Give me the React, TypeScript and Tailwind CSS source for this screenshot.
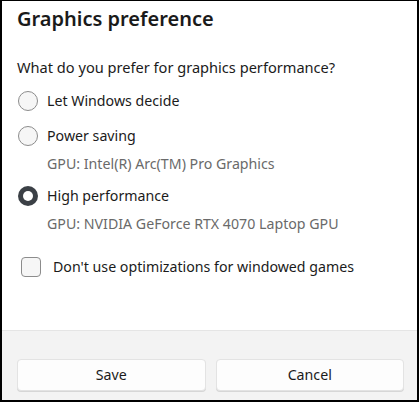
import React, { useState } from "react";

const font = { fontFamily: '"Noto Sans", "Open Sans", sans-serif' };

function Radio({
  label,
  sub,
  checked,
  onSelect,
}: {
  label: string;
  sub?: string;
  checked: boolean;
  onSelect: () => void;
}) {
  return (
    <div>
      <button
        type="button"
        onClick={onSelect}
        className="flex h-[35px] items-center gap-[9px] text-left"
      >
        {checked ? (
          <span className="flex h-5 w-5 items-center justify-center rounded-full bg-[#3b4046]">
            <span className="h-[10px] w-[10px] rounded-full bg-white" />
          </span>
        ) : (
          <span className="h-5 w-5 rounded-full border border-[#8c8c8c] bg-[#f6f6f6]" />
        )}
        <span className="text-[14.2px] text-[#1b1b1b]">{label}</span>
      </button>
      {sub && (
        <div className="mb-[4px] flex h-[21px] items-center pl-[29px] text-[14.2px] text-[#6a6a6a]">
          {sub}
        </div>
      )}
    </div>
  );
}

export default function App() {
  const [choice, setChoice] = useState("high");
  const [noOpt, setNoOpt] = useState(false);

  return (
    <div
      style={font}
      className="flex h-[402px] w-[419px] flex-col overflow-hidden border-t border-b-2 border-l-2 border-r-2 border-black bg-white"
    >
      <div className="flex-1 px-[15px] pt-[4px]">
        <h1 className="text-[20px] font-semibold leading-[28px] text-[#1a1a1a]">
          Graphics preference
        </h1>
        <p className="mt-[24px] text-[14.6px] leading-[20px] text-[#1b1b1b]">
          What do you prefer for graphics performance?
        </p>
        <div className="mt-[6px] pl-[1px]">
          <Radio
            label="Let Windows decide"
            checked={choice === "auto"}
            onSelect={() => setChoice("auto")}
          />
          <Radio
            label="Power saving"
            sub="GPU: Intel(R) Arc(TM) Pro Graphics"
            checked={choice === "saving"}
            onSelect={() => setChoice("saving")}
          />
          <Radio
            label="High performance"
            sub="GPU: NVIDIA GeForce RTX 4070 Laptop GPU"
            checked={choice === "high"}
            onSelect={() => setChoice("high")}
          />
        </div>
        <button
          type="button"
          onClick={() => setNoOpt(!noOpt)}
          className="mt-[22px] flex items-center gap-[12px] pl-[4px] text-left"
        >
          <span className="h-5 w-5 rounded-[4px] border border-[#8c8c8c] bg-[#f6f6f6]">
            {noOpt && (
              <svg viewBox="0 0 20 20" className="h-full w-full">
                <path d="M5 10l3.5 3.5L15 7" fill="none" stroke="#1b1b1b" strokeWidth="1.5" />
              </svg>
            )}
          </span>
          <span className="text-[14.2px] text-[#1b1b1b]">
            Don't use optimizations for windowed games
          </span>
        </button>
      </div>
      <div className="flex h-[70px] gap-[10px] border-t border-[#e5e5e5] bg-[#f3f3f3] pl-[15px] pr-[13px] pt-[28px]">
        <button
          type="button"
          className="h-[32px] flex-1 rounded-[4px] border border-[#e3e3e3] bg-[#fdfdfd] text-[14.2px] text-[#1b1b1b] shadow-[0_1px_0_#d6d6d6]"
        >
          Save
        </button>
        <button
          type="button"
          className="h-[32px] flex-1 rounded-[4px] border border-[#e3e3e3] bg-[#fdfdfd] text-[14.2px] text-[#1b1b1b] shadow-[0_1px_0_#d6d6d6]"
        >
          Cancel
        </button>
      </div>
    </div>
  );
}
